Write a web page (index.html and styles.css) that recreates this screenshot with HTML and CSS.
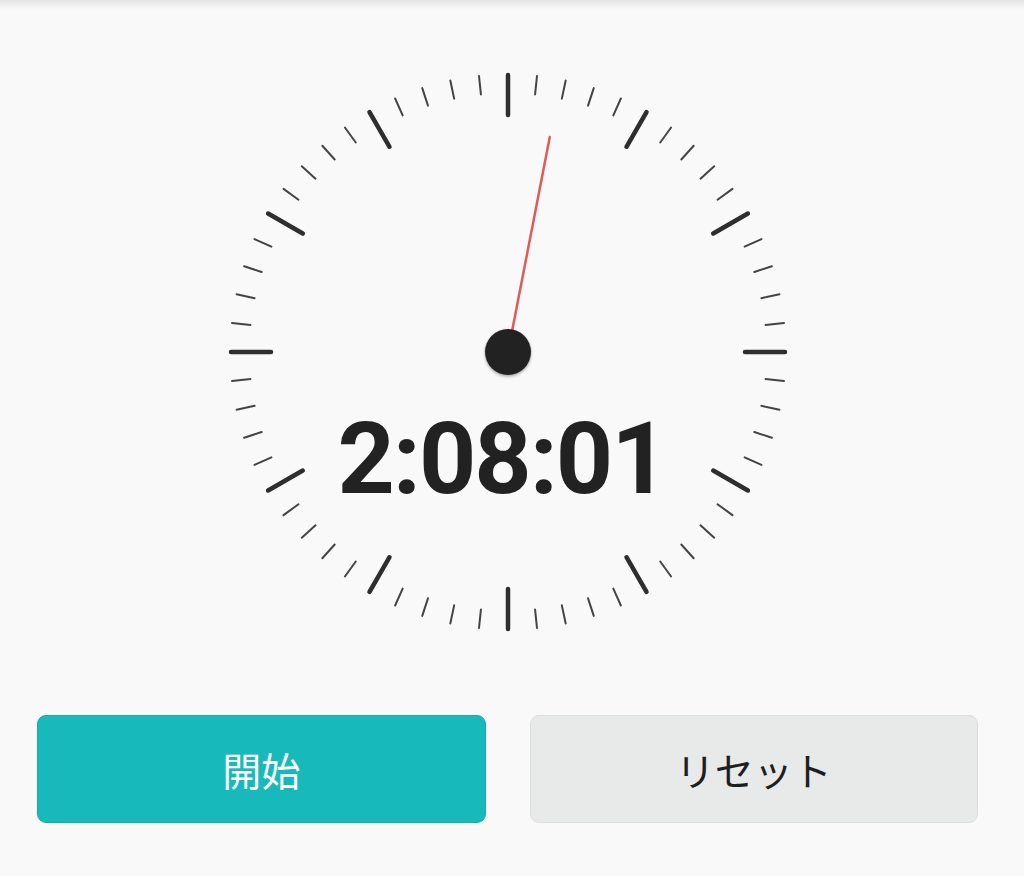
FILE: index.html
```html
<!DOCTYPE html>
<html lang="ja">
<head>
<meta charset="utf-8">
<title>Stopwatch</title>
<link rel="stylesheet" href="styles.css">
</head>
<body>
<div class="topshade"></div>
<main class="app">
  <section class="dial-wrap">
    <svg class="dial" width="560" height="560" viewBox="-280 -280 560 560">
      <defs>
        <line id="mn" x1="0" y1="-277.5" x2="0" y2="-259" class="minor"/>
        <line id="mj" x1="0" y1="-277" x2="0" y2="-237" class="major"/>
        <filter id="sh" x="-50%" y="-50%" width="200%" height="200%">
          <feDropShadow dx="0" dy="1.5" stdDeviation="1.5" flood-color="#000" flood-opacity="0.35"/>
        </filter>
      </defs>
      <g class="ticks">
        <use href="#mj" transform="rotate(0)"/>
        <use href="#mn" transform="rotate(6)"/>
        <use href="#mn" transform="rotate(12)"/>
        <use href="#mn" transform="rotate(18)"/>
        <use href="#mn" transform="rotate(24)"/>
        <use href="#mj" transform="rotate(30)"/>
        <use href="#mn" transform="rotate(36)"/>
        <use href="#mn" transform="rotate(42)"/>
        <use href="#mn" transform="rotate(48)"/>
        <use href="#mn" transform="rotate(54)"/>
        <use href="#mj" transform="rotate(60)"/>
        <use href="#mn" transform="rotate(66)"/>
        <use href="#mn" transform="rotate(72)"/>
        <use href="#mn" transform="rotate(78)"/>
        <use href="#mn" transform="rotate(84)"/>
        <use href="#mj" transform="rotate(90)"/>
        <use href="#mn" transform="rotate(96)"/>
        <use href="#mn" transform="rotate(102)"/>
        <use href="#mn" transform="rotate(108)"/>
        <use href="#mn" transform="rotate(114)"/>
        <use href="#mj" transform="rotate(120)"/>
        <use href="#mn" transform="rotate(126)"/>
        <use href="#mn" transform="rotate(132)"/>
        <use href="#mn" transform="rotate(138)"/>
        <use href="#mn" transform="rotate(144)"/>
        <use href="#mj" transform="rotate(150)"/>
        <use href="#mn" transform="rotate(156)"/>
        <use href="#mn" transform="rotate(162)"/>
        <use href="#mn" transform="rotate(168)"/>
        <use href="#mn" transform="rotate(174)"/>
        <use href="#mj" transform="rotate(180)"/>
        <use href="#mn" transform="rotate(186)"/>
        <use href="#mn" transform="rotate(192)"/>
        <use href="#mn" transform="rotate(198)"/>
        <use href="#mn" transform="rotate(204)"/>
        <use href="#mj" transform="rotate(210)"/>
        <use href="#mn" transform="rotate(216)"/>
        <use href="#mn" transform="rotate(222)"/>
        <use href="#mn" transform="rotate(228)"/>
        <use href="#mn" transform="rotate(234)"/>
        <use href="#mj" transform="rotate(240)"/>
        <use href="#mn" transform="rotate(246)"/>
        <use href="#mn" transform="rotate(252)"/>
        <use href="#mn" transform="rotate(258)"/>
        <use href="#mn" transform="rotate(264)"/>
        <use href="#mj" transform="rotate(270)"/>
        <use href="#mn" transform="rotate(276)"/>
        <use href="#mn" transform="rotate(282)"/>
        <use href="#mn" transform="rotate(288)"/>
        <use href="#mn" transform="rotate(294)"/>
        <use href="#mj" transform="rotate(300)"/>
        <use href="#mn" transform="rotate(306)"/>
        <use href="#mn" transform="rotate(312)"/>
        <use href="#mn" transform="rotate(318)"/>
        <use href="#mn" transform="rotate(324)"/>
        <use href="#mj" transform="rotate(330)"/>
        <use href="#mn" transform="rotate(336)"/>
        <use href="#mn" transform="rotate(342)"/>
        <use href="#mn" transform="rotate(348)"/>
        <use href="#mn" transform="rotate(354)"/>
      </g>
      <text class="time" x="-6" y="141" text-anchor="middle">2:08:01</text>
      <line class="hand" x1="0" y1="0" x2="0" y2="-219" transform="rotate(11)"/>
      <circle class="hub" cx="0" cy="0" r="23" filter="url(#sh)"/>
    </svg>
  </section>
  <section class="actions">
    <button class="btn btn-start" type="button">開始</button>
    <button class="btn btn-reset" type="button">リセット</button>
  </section>
</main>
</body>
</html>
```
FILE: styles.css
```css
html, body {
  margin: 0;
  padding: 0;
}
body {
  width: 1024px;
  height: 876px;
  overflow: hidden;
  background: #f9f9f9;
  font-family: "Noto Sans CJK JP", Roboto, "Noto Sans", sans-serif;
}
.topshade {
  height: 10px;
  background: linear-gradient(#e4e4e4, #f9f9f9);
}
.app {
  display: flex;
  flex-direction: column;
  padding: 0 46px 0 37px;
}
.dial-wrap {
  display: flex;
  justify-content: center;
  padding-top: 62px;
}
.dial {
  display: block;
  overflow: visible;
}
.minor {
  stroke: #444;
  stroke-width: 2;
  stroke-linecap: round;
}
.major {
  stroke: #2e2e2e;
  stroke-width: 4.5;
  stroke-linecap: round;
}
.time {
  font-family: Roboto, "Liberation Sans", sans-serif;
  font-weight: 700;
  font-size: 100px;
  letter-spacing: -2px;
  fill: #222;
}
.hand {
  stroke: #e05a58;
  stroke-width: 2.5;
  stroke-linecap: round;
}
.hub {
  fill: #222;
}
.actions {
  display: flex;
  gap: 44px;
  margin-top: 83px;
}
.btn {
  flex: 1;
  height: 108px;
  border-radius: 9px;
  font-family: "Noto Sans CJK JP", "Noto Sans", sans-serif;
  font-size: 39px;
  font-weight: 400;
  padding: 0;
  display: flex;
  align-items: center;
  justify-content: center;
}
.btn-start {
  background: #17b9bb;
  border: 1.5px solid #13aeb0;
  color: #fff;
}
.btn-reset {
  background: #e8e9e9;
  border: 1.5px solid #dcdddd;
  color: #1e1e1e;
}
```
